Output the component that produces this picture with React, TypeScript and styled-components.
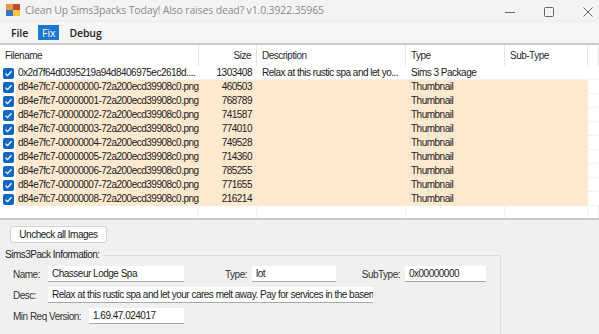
import styled, { createGlobalStyle } from 'styled-components'

const GlobalStyle = createGlobalStyle`
  html, body { margin: 0; padding: 0; }
  body {
    width: 599px;
    height: 334px;
    overflow: hidden;
    background: #f0f0f0;
    font-family: "Liberation Sans", Arial, sans-serif;
    font-size: 10px;
    letter-spacing: -0.5px;
    color: #1b1b1b;
  }
`

const rows = [
  { name: '0x2d7f64d0395219a94d8406975ec2618d....', size: '1303408', desc: 'Relax at this rustic spa and let yo...', type: 'Sims 3 Package', marked: false },
  { name: 'd84e7fc7-00000000-72a200ecd39908c0.png', size: '460503', desc: '', type: 'Thumbnail', marked: true },
  { name: 'd84e7fc7-00000001-72a200ecd39908c0.png', size: '768789', desc: '', type: 'Thumbnail', marked: true },
  { name: 'd84e7fc7-00000002-72a200ecd39908c0.png', size: '741587', desc: '', type: 'Thumbnail', marked: true },
  { name: 'd84e7fc7-00000003-72a200ecd39908c0.png', size: '774010', desc: '', type: 'Thumbnail', marked: true },
  { name: 'd84e7fc7-00000004-72a200ecd39908c0.png', size: '749528', desc: '', type: 'Thumbnail', marked: true },
  { name: 'd84e7fc7-00000005-72a200ecd39908c0.png', size: '714360', desc: '', type: 'Thumbnail', marked: true },
  { name: 'd84e7fc7-00000006-72a200ecd39908c0.png', size: '785255', desc: '', type: 'Thumbnail', marked: true },
  { name: 'd84e7fc7-00000007-72a200ecd39908c0.png', size: '771655', desc: '', type: 'Thumbnail', marked: true },
  { name: 'd84e7fc7-00000008-72a200ecd39908c0.png', size: '216214', desc: '', type: 'Thumbnail', marked: true },
]

const COLS = '199px 58px 149px 99px 83px 1fr'

const App: React.FC = () => {
  return (
    <Window>
      <GlobalStyle />
      <TitleBar>
        <AppIcon width="14" height="12" viewBox="0 0 14 12">
          <rect x="0" y="0" width="7" height="6" fill="#e89a3c" />
          <rect x="7" y="0" width="7" height="6" fill="#c44a2c" />
          <rect x="0" y="6" width="7" height="6" fill="#3b74c4" />
          <rect x="7" y="6" width="7" height="6" fill="#f2c640" />
        </AppIcon>
        <Title>Clean Up Sims3packs Today! Also raises dead? v1.0.3922.35965</Title>
        <Controls>
          <CtrlButton>
            <svg width="10" height="10" viewBox="0 0 10 10"><path d="M0 5.5h10" stroke="#666" strokeWidth="1" /></svg>
          </CtrlButton>
          <CtrlButton>
            <svg width="10" height="10" viewBox="0 0 10 10"><rect x="0.5" y="0.5" width="9" height="9" rx="1" fill="none" stroke="#666" strokeWidth="1" /></svg>
          </CtrlButton>
          <CtrlButton>
            <svg width="10" height="10" viewBox="0 0 10 10"><path d="M0.5 0.5l9 9M9.5 0.5l-9 9" stroke="#666" strokeWidth="1" /></svg>
          </CtrlButton>
        </Controls>
      </TitleBar>

      <MenuBar>
        <MenuItem>File</MenuItem>
        <MenuItem active>Fix</MenuItem>
        <MenuItem>Debug</MenuItem>
      </MenuBar>

      <List>
        <HeaderRow>
          <HeadCell>Filename</HeadCell>
          <HeadCell right>Size</HeadCell>
          <HeadCell>Description</HeadCell>
          <HeadCell>Type</HeadCell>
          <HeadCell>Sub-Type</HeadCell>
          <HeadCell />
        </HeaderRow>
        {rows.map((r) => (
          <Row key={r.name}>
            <NameCell>
              <Check>
                <svg width="9" height="9" viewBox="0 0 9 9">
                  <path d="M1.5 4.6l2 2 4-4.4" fill="none" stroke="#fff" strokeWidth="1.3" />
                </svg>
              </Check>
              <Cell marked={r.marked} grow>{r.name}</Cell>
            </NameCell>
            <Cell marked={r.marked} right>{r.size}</Cell>
            <Cell marked={r.marked}>{r.desc}</Cell>
            <Cell marked={r.marked}>{r.type}</Cell>
            <Cell marked={r.marked} />
            <GridCell />
          </Row>
        ))}
        <Filler>
          <GridCell />
          <GridCell />
          <GridCell />
          <GridCell />
          <GridCell />
          <GridCell />
        </Filler>
      </List>

      <Bottom>
        <Button>Uncheck all Images</Button>
        <Group>
          <GroupLegend>Sims3Pack Information:</GroupLegend>
          <FieldRow>
            <Label w={35}>Name:</Label>
            <TextBox w={136}>Chasseur Lodge Spa</TextBox>
            <Label w={68} right>Type:</Label>
            <TextBox w={84}>lot</TextBox>
            <Label w={69} right>SubType:</Label>
            <TextBox w={81}>0x00000000</TextBox>
          </FieldRow>
          <FieldRow>
            <Label w={35}>Desc:</Label>
            <TextBox w={325}>Relax at this rustic spa and let your cares melt away. Pay for services in the basem</TextBox>
          </FieldRow>
          <FieldRow>
            <Label w={76}>Min Req Version:</Label>
            <TextBox w={95}>1.69.47.024017</TextBox>
          </FieldRow>
        </Group>
      </Bottom>
    </Window>
  )
}

export default App

const Window = styled.div`
  width: 599px;
  height: 334px;
  display: flex;
  flex-direction: column;
  background: #f0f0f0;
  overflow: hidden;
`

const TitleBar = styled.div`
  height: 20px;
  display: flex;
  align-items: center;
  padding-left: 6px;
  background: #f3f3f3;
`

const AppIcon = styled.svg`
  margin-right: 5px;
  flex-shrink: 0;
`

const Title = styled.div`
  flex: 1;
  font-family: "Open Sans", "Noto Sans", sans-serif;
  font-size: 10.5px;
  letter-spacing: -0.15px;
  color: #8a8a8a;
  white-space: nowrap;
`

const Controls = styled.div`
  display: flex;
  align-items: center;
  gap: 19px;
  padding-right: 1px;
  margin-top: 3px;
`

const CtrlButton = styled.div`
  width: 20px;
  height: 20px;
  display: flex;
  align-items: center;
  justify-content: center;
`

const MenuBar = styled.div`
  height: 21px;
  display: flex;
  align-items: center;
  gap: 6px;
  padding-left: 7px;
  background: #f5f5f5;
  border-bottom: 2px solid #c9c9c9;
  margin-top: 2px;
`

const MenuItem = styled.div<{ active?: boolean }>`
  height: 15px;
  display: flex;
  align-items: center;
  padding: 0 4px;
  font-family: "Open Sans", "Noto Sans", sans-serif;
  font-size: 10.5px;
  letter-spacing: -0.1px;
  color: ${(p) => (p.active ? '#ffffff' : '#1e1e1e')};
  background: ${(p) => (p.active ? '#1b78d0' : 'transparent')};
  font-weight: ${(p) => (p.active ? 400 : 600)};
`

const List = styled.div`
  height: 173px;
  display: flex;
  flex-direction: column;
  background: #ffffff;
  border-bottom: 2px solid #c8c8c8;
`

const HeaderRow = styled.div`
  display: grid;
  grid-template-columns: ${COLS};
  height: 21px;
`

const HeadCell = styled.div<{ right?: boolean }>`
  display: flex;
  align-items: center;
  justify-content: ${(p) => (p.right ? 'flex-end' : 'flex-start')};
  padding: 0 5px 0 5px;
  color: #2a2a2a;
  border-right: 1px solid #e5e5e5;
  white-space: nowrap;
  overflow: hidden;
`

const Row = styled.div`
  display: grid;
  grid-template-columns: ${COLS};
  height: 14px;
  line-height: 14px;
`

const NameCell = styled.div`
  display: flex;
  align-items: center;
  min-width: 0;
`

const Check = styled.div`
  width: 11px;
  height: 11px;
  margin: 0 2px 0 3px;
  flex-shrink: 0;
  border-radius: 2px;
  background: #1466c2;
  display: flex;
  align-items: center;
  justify-content: center;
`

const Cell = styled.div<{ marked?: boolean; right?: boolean; grow?: boolean }>`
  flex: ${(p) => (p.grow ? 1 : 'none')};
  height: 14px;
  min-width: 0;
  padding: ${(p) => (p.grow ? '0 0 0 2px' : '0 5px')};
  text-align: ${(p) => (p.right ? 'right' : 'left')};
  background: ${(p) => (p.marked ? '#fde9d0' : '#ffffff')};
  color: #202020;
  white-space: nowrap;
  overflow: hidden;
  border-bottom: ${(p) => (p.marked ? 'none' : '1px solid #f3f3f3')};
  box-sizing: border-box;
`

const GridCell = styled.div`
  border-bottom: 1px solid #f0f0f0;
  box-sizing: border-box;
`

const Filler = styled.div`
  flex: 1;
  display: grid;
  grid-template-columns: ${COLS};
  & > div {
    border-right: 1px solid #f0f0f0;
    border-bottom: none;
  }
`

const Bottom = styled.div`
  flex: 1;
  display: flex;
  flex-direction: column;
  padding: 6px 0 0 6px;
`

const Button = styled.div`
  align-self: flex-start;
  margin-left: 4px;
  width: 97px;
  height: 17px;
  box-sizing: border-box;
  display: flex;
  align-items: center;
  justify-content: center;
  background: #fdfdfd;
  border: 1px solid #d3d3d3;
  border-radius: 3px;
  color: #222;
  white-space: nowrap;
`

const Group = styled.div`
  width: 487px;
  flex: 1;
  margin-top: 12px;
  border-top: 1px solid #dcdcdc;
  border-right: 1px solid #dcdcdc;
  position: relative;
  padding: 10px 0 0 7px;
  display: flex;
  flex-direction: column;
  gap: 5px;
`

const GroupLegend = styled.div`
  position: absolute;
  top: -7px;
  left: -1px;
  padding-right: 3px;
  background: #f0f0f0;
  color: #222;
`

const FieldRow = styled.div`
  display: flex;
  align-items: center;
  height: 16px;
`

const Label = styled.div<{ w: number; right?: boolean }>`
  width: ${(p) => p.w}px;
  text-align: ${(p) => (p.right ? 'right' : 'left')};
  padding-right: ${(p) => (p.right ? 5 : 0)}px;
  box-sizing: border-box;
  color: #333;
  white-space: nowrap;
  flex-shrink: 0;
`

const TextBox = styled.div<{ w: number }>`
  width: ${(p) => p.w}px;
  height: 16px;
  box-sizing: border-box;
  padding: 0 4px;
  background: #ffffff;
  border-bottom: 1px solid #a8a8a8;
  line-height: 15px;
  color: #1b1b1b;
  white-space: nowrap;
  overflow: hidden;
  flex-shrink: 0;
`
